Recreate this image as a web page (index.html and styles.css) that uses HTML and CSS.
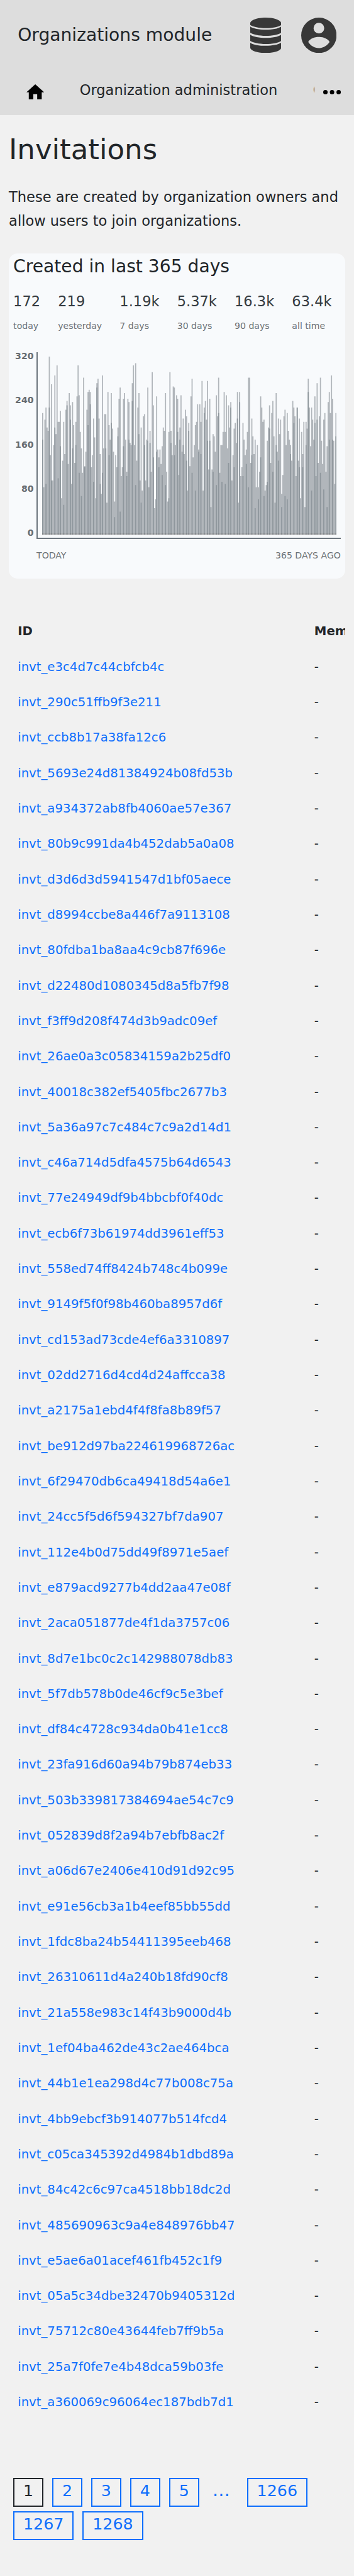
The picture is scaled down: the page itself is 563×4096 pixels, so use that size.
FILE: index.html
```html
<!DOCTYPE html>
<html lang="en">
<head>
<meta charset="utf-8">
<title>Invitations</title>
<link rel="stylesheet" href="styles.css">
</head>
<body>
<header class="header">
  <div class="topbar">
    <span class="brand">Organizations module</span>
    <svg class="icon-db" viewBox="0 0 168 192"><path d="M0 31C0 14 38 0 84 0s84 14 84 31v9c-14 10-48 17-84 17S14 50 0 40zM0 49c16 11 49 17 84 17s68-6 84-17v33c-14 10-48 17-84 17S14 92 0 82zM0 93c16 11 49 17 84 17s68-6 84-17v33c-14 10-48 17-84 17S14 136 0 126zM0 136c16 11 49 17 84 17s68-6 84-17v27c0 16-38 29-84 29S0 179 0 163z"/></svg>
    <svg class="icon-user" viewBox="0 0 192 192"><path fill-rule="evenodd" d="M96 0a96 96 0 1 1 0 192A96 96 0 0 1 96 0zM96 28a29 29 0 1 0 0 58a29 29 0 1 0 0-58zM38 132C48 114 72 105 96 105s48 9 58 27c-13 20-34 33-58 33s-45-13-58-33z"/></svg>
  </div>
  <nav class="nav">
    <svg class="icon-home" viewBox="0 0 32 28"><path d="M16 0l16 14.500h-4.300V28h-8.200V18h-7v10H4.300V14.500H0z"/></svg>
    <div class="tabs"><span>Organization administration</span><span>Organizations</span></div>
    <svg class="icon-more" viewBox="0 0 32 8"><circle cx="4" cy="4" r="4"/><circle cx="16" cy="4" r="4"/><circle cx="28" cy="4" r="4"/></svg>
  </nav>
</header>
<main class="main">
  <h1 class="title">Invitations</h1>
  <p class="intro">These are created by organization owners and allow users to join organizations.</p>
  <section class="card">
    <h2 class="card-title">Created in last 365 days</h2>
    <div class="stats">
      <div><b>172</b><small>today</small></div>
      <div><b>219</b><small>yesterday</small></div>
      <div><b>1.19k</b><small>7 days</small></div>
      <div><b>5.37k</b><small>30 days</small></div>
      <div><b>16.3k</b><small>90 days</small></div>
      <div><b>63.4k</b><small>all time</small></div>
    </div>
    <div class="chart">
      <div class="y-axis"><span>320</span><span>240</span><span>160</span><span>80</span><span>0</span></div>
      <div class="plot">
        <svg class="bars" viewBox="0 0 266 161" preserveAspectRatio="none">
          <path class="bar-light" id="light"/><path class="bar-dark" id="dark"/>
          <path class="base-light" d="M0 160h266v1H0z"/><path class="base-dark" id="base"/>
        </svg>
      </div>
    </div>
    <div class="x-axis"><span>TODAY</span><span>365 DAYS AGO</span></div>
  </section>
  <div class="table-wrap">
    <table class="table">
      <thead><tr><th class="col-id">ID</th><th>Membership</th></tr></thead>
      <tbody id="rows"></tbody>
    </table>
  </div>
  <nav class="pages">
    <a class="current">1</a><a>2</a><a>3</a><a>4</a><a>5</a><span class="gap">…</span><a>1266</a><a>1267</a><a>1268</a>
  </nav>
</main>
<script src="page.js"></script>
</body>
</html>
```
FILE: styles.css
```css
/* 1rem = 8.8px */
html { font-size: 8.8px; overflow: hidden; background: #f1f1f1; }
* { box-sizing: border-box; }
body { margin: 0; font-family: "DejaVu Sans", sans-serif; font-size: 2.56rem; color: #212529; min-height: 100vh; }
svg { display: block; flex: none; }

.header { background: #ddd; height: 20.8rem; }
.topbar { display: flex; align-items: center; height: 12.8rem; padding: 0 3.2rem; }
.brand { flex: 1; font-size: 3.2rem; line-height: 1.2; white-space: nowrap; }
.icon-db { width: 5.6rem; height: 6.4rem; margin-right: 3.6rem; fill: #383838; }
.icon-user { width: 6.4rem; height: 6.4rem; fill: #383838; }
.nav { display: flex; align-items: center; height: 7.6rem; padding: 0 2.4rem 0 4.8rem; }
.icon-home { width: 3.2rem; height: 2.8rem; }
.tabs { flex: 1; display: flex; gap: 6.4rem; margin: 0 1.6rem 0 6.4rem; padding-bottom: .5rem; overflow: hidden; white-space: nowrap; line-height: 4rem; }
.icon-more { width: 3.2rem; height: .8rem; }

.main { padding: 3.2rem 1.6rem 0; }
.title { margin: 0; font-size: 5.12rem; font-weight: 400; line-height: 6.2rem; }
.intro { margin: 3.2rem 0 3.7rem; line-height: 4.352rem; }

.card { height: 58.8rem; border-radius: 1.6rem; background: #f8fafc; padding: .15rem .8rem 0; overflow: hidden; }
.card-title { margin: 0; font-size: 3.2rem; font-weight: 400; line-height: 4.6rem; }
.stats { display: flex; gap: 3.2rem; margin-top: 1.8rem; height: 11.25rem; }
.stats b { display: block; font-weight: 400; line-height: 4.1rem; color: #343a40; }
.stats small { display: block; margin-top: 1rem; font-size: 1.6rem; line-height: 2.9rem; color: #6c7175; white-space: nowrap; }
.chart { display: flex; }
.y-axis { display: flex; flex-direction: column; justify-content: space-between; width: 3.7rem; height: 33.6rem; margin: -.1rem .5rem 0 0; font-size: 1.6rem; font-weight: 700; line-height: 1.6rem; text-align: right; color: #666b70; }
.plot { width: 55rem; height: 33.8rem; padding: .8rem .8rem 0 .78rem; border-left: 2px solid #6c757d; border-bottom: 2px solid #6c757d; }
.bars { width: 53.2rem; height: 32.2rem; }
.bar-light { fill: #b1b6bb; }
.bar-dark { fill: #8f979d; }
.base-light { fill: #98999b; }
.base-dark { fill: #686c70; }
.x-axis { display: flex; justify-content: space-between; margin-top: 1.6rem; padding-left: 4.2rem; font-size: 1.6rem; line-height: 2.9rem; color: #6c7175; }

.table-wrap { margin-top: 6.35rem; overflow: hidden; }
.table { width: 72rem; table-layout: fixed; border-collapse: collapse; font-size: 2.24rem; line-height: 3.2rem; }
.table th, .table td { height: 6.4rem; padding: 0 1.6rem; text-align: left; white-space: nowrap; }
.col-id { width: 53.6rem; }
.table a, .pages { color: #0d6efd; }

.pages { display: flex; flex-wrap: wrap; gap: .85rem 1.6rem; margin: 10.45rem 0 0; padding: 0 .8rem; font-size: 2.88rem; }
.pages a { height: 5.2rem; padding: 0 1.575rem; border: 2px solid #0d6efd; line-height: 4.3rem; }
.pages .current { color: #212529; border-color: #212529; }
.gap { width: 5.45rem; padding-left: .8rem; font-size: 3.2rem; line-height: 4.6rem; }
```
FILE: page.js
```js
// Each bar: top edge, optionally ":" and the top of its darker part, in sixths of a plot row.
const bars = `378:522 780 414 348:762 456 474 72:348 606 222:744 744 552 174:456 492 120 426:732 426 366:558 840 636 426:876
600 360 312:336 654 270 336:414 762 318:570 444 648 426:552 288 120 282:702 480 570:828 702 186 666:672 588
360 264:444 252 264:330 672 606 408:750 510 840 216:240 192 408 600:762 816 174:702 570 384 384:570 864 264
444:606 522 270:432 462 588 858:942 606 672 456:504 300 240:912 720 672 300:558 270 522 696:720 300 318:522 540
552 216:312 120 552 108:768 636 348 270:492 744 456:864 798 396 384:552 744 522 240:528 780 474:540 696 156
336:618 894 846 288:588 576 618:672 576 654 558:714 456 474 270:768 696 858 480:840 156 474:540 606 234 240:606
552 282 300:480 714 456:522 282 588 408:552 600 360 396:636 798 432:474 666 288 192:702 618 552 444:798 426
330 576:588 330 426:600 204 798 348:378 312 414 204:528 684 300:528 888 684 492:696 504 588 282:768 396 186:378
702 552 552:750 480 264 480:762 282 570 336:648 456 318:348 744 606 462:672 432 540 264:408 864 264:318 720
672 432:720 522 606 576:654 480 186:780 186 648 408:606 504 600 522:894 780 552 780:846 696 288:618 348 426
414:828 798 768 528:750 456 336:462 648 378 312:696 504 864 270:552 588 408:636 492 414 816:888 714 396 360:828
552 378:846 474 522 552:600 636 312 348:432 396 720 348:348 636 408:672 840 480 600:672 426 888 426:552 462
192:264 348 558 348:798 414 522 288:432 720 216:414 648 396 186:702 528 654 414:792 378 696 558:888 318 264:522
378 174 300:522 528 762 378:504`.split(/\s+/);

let light = '', dark = '', base = '';
bars.forEach((bar, i) => {
  const [top, inner] = bar.split(':').map(v => (v - 72) / 6);
  light += `M${i} ${top}h1V161h-1z`;
  if (inner !== undefined) {
    dark += `M${i} ${inner}h1V161h-1z`;
    base += `M${i} 160h1v1h-1z`;
  }
});
document.getElementById('light').setAttribute('d', light);
document.getElementById('dark').setAttribute('d', dark);
document.getElementById('base').setAttribute('d', base);

const ids = `e3c4d7c44cbfcb4c 290c51ffb9f3e211 ccb8b17a38fa12c6 5693e24d81384924b08fd53b a934372ab8fb4060ae57e367
80b9c991da4b452dab5a0a08 d3d6d3d5941547d1bf05aece d8994ccbe8a446f7a9113108 80fdba1ba8aa4c9cb87f696e d22480d1080345d8a5fb7f98
f3ff9d208f474d3b9adc09ef 26ae0a3c05834159a2b25df0 40018c382ef5405fbc2677b3 5a36a97c7c484c7c9a2d14d1 c46a714d5dfa4575b64d6543
77e24949df9b4bbcbf0f40dc ecb6f73b61974dd3961eff53 558ed74ff8424b748c4b099e 9149f5f0f98b460ba8957d6f cd153ad73cde4ef6a3310897
02dd2716d4cd4d24affcca38 a2175a1ebd4f4f8fa8b89f57 be912d97ba224619968726ac 6f29470db6ca49418d54a6e1 24cc5f5d6f594327bf7da907
112e4b0d75dd49f8971e5aef e879acd9277b4dd2aa47e08f 2aca051877de4f1da3757c06 8d7e1bc0c2c142988078db83 5f7db578b0de46cf9c5e3bef
df84c4728c934da0b41e1cc8 23fa916d60a94b79b874eb33 503b339817384694ae54c7c9 052839d8f2a94b7ebfb8ac2f a06d67e2406e410d91d92c95
e91e56cb3a1b4eef85bb55dd 1fdc8ba24b54411395eeb468 26310611d4a240b18fd90cf8 21a558e983c14f43b9000d4b 1ef04ba462de43c2ae464bca
44b1e1ea298d4c77b008c75a 4bb9ebcf3b914077b514fcd4 c05ca345392d4984b1dbd89a 84c42c6c97ca4518bb18dc2d 485690963c9a4e848976bb47
e5ae6a01acef461fb452c1f9 05a5c34dbe32470b9405312d 75712c80e43644feb7ff9b5a 25a7f0fe7e4b48dca59b03fe a360069c96064ec187bdb7d1`.split(/\s+/);
document.getElementById('rows').innerHTML =
  ids.map(id => `<tr><td><a>invt_${id}</a></td><td>-</td></tr>`).join('');
```
